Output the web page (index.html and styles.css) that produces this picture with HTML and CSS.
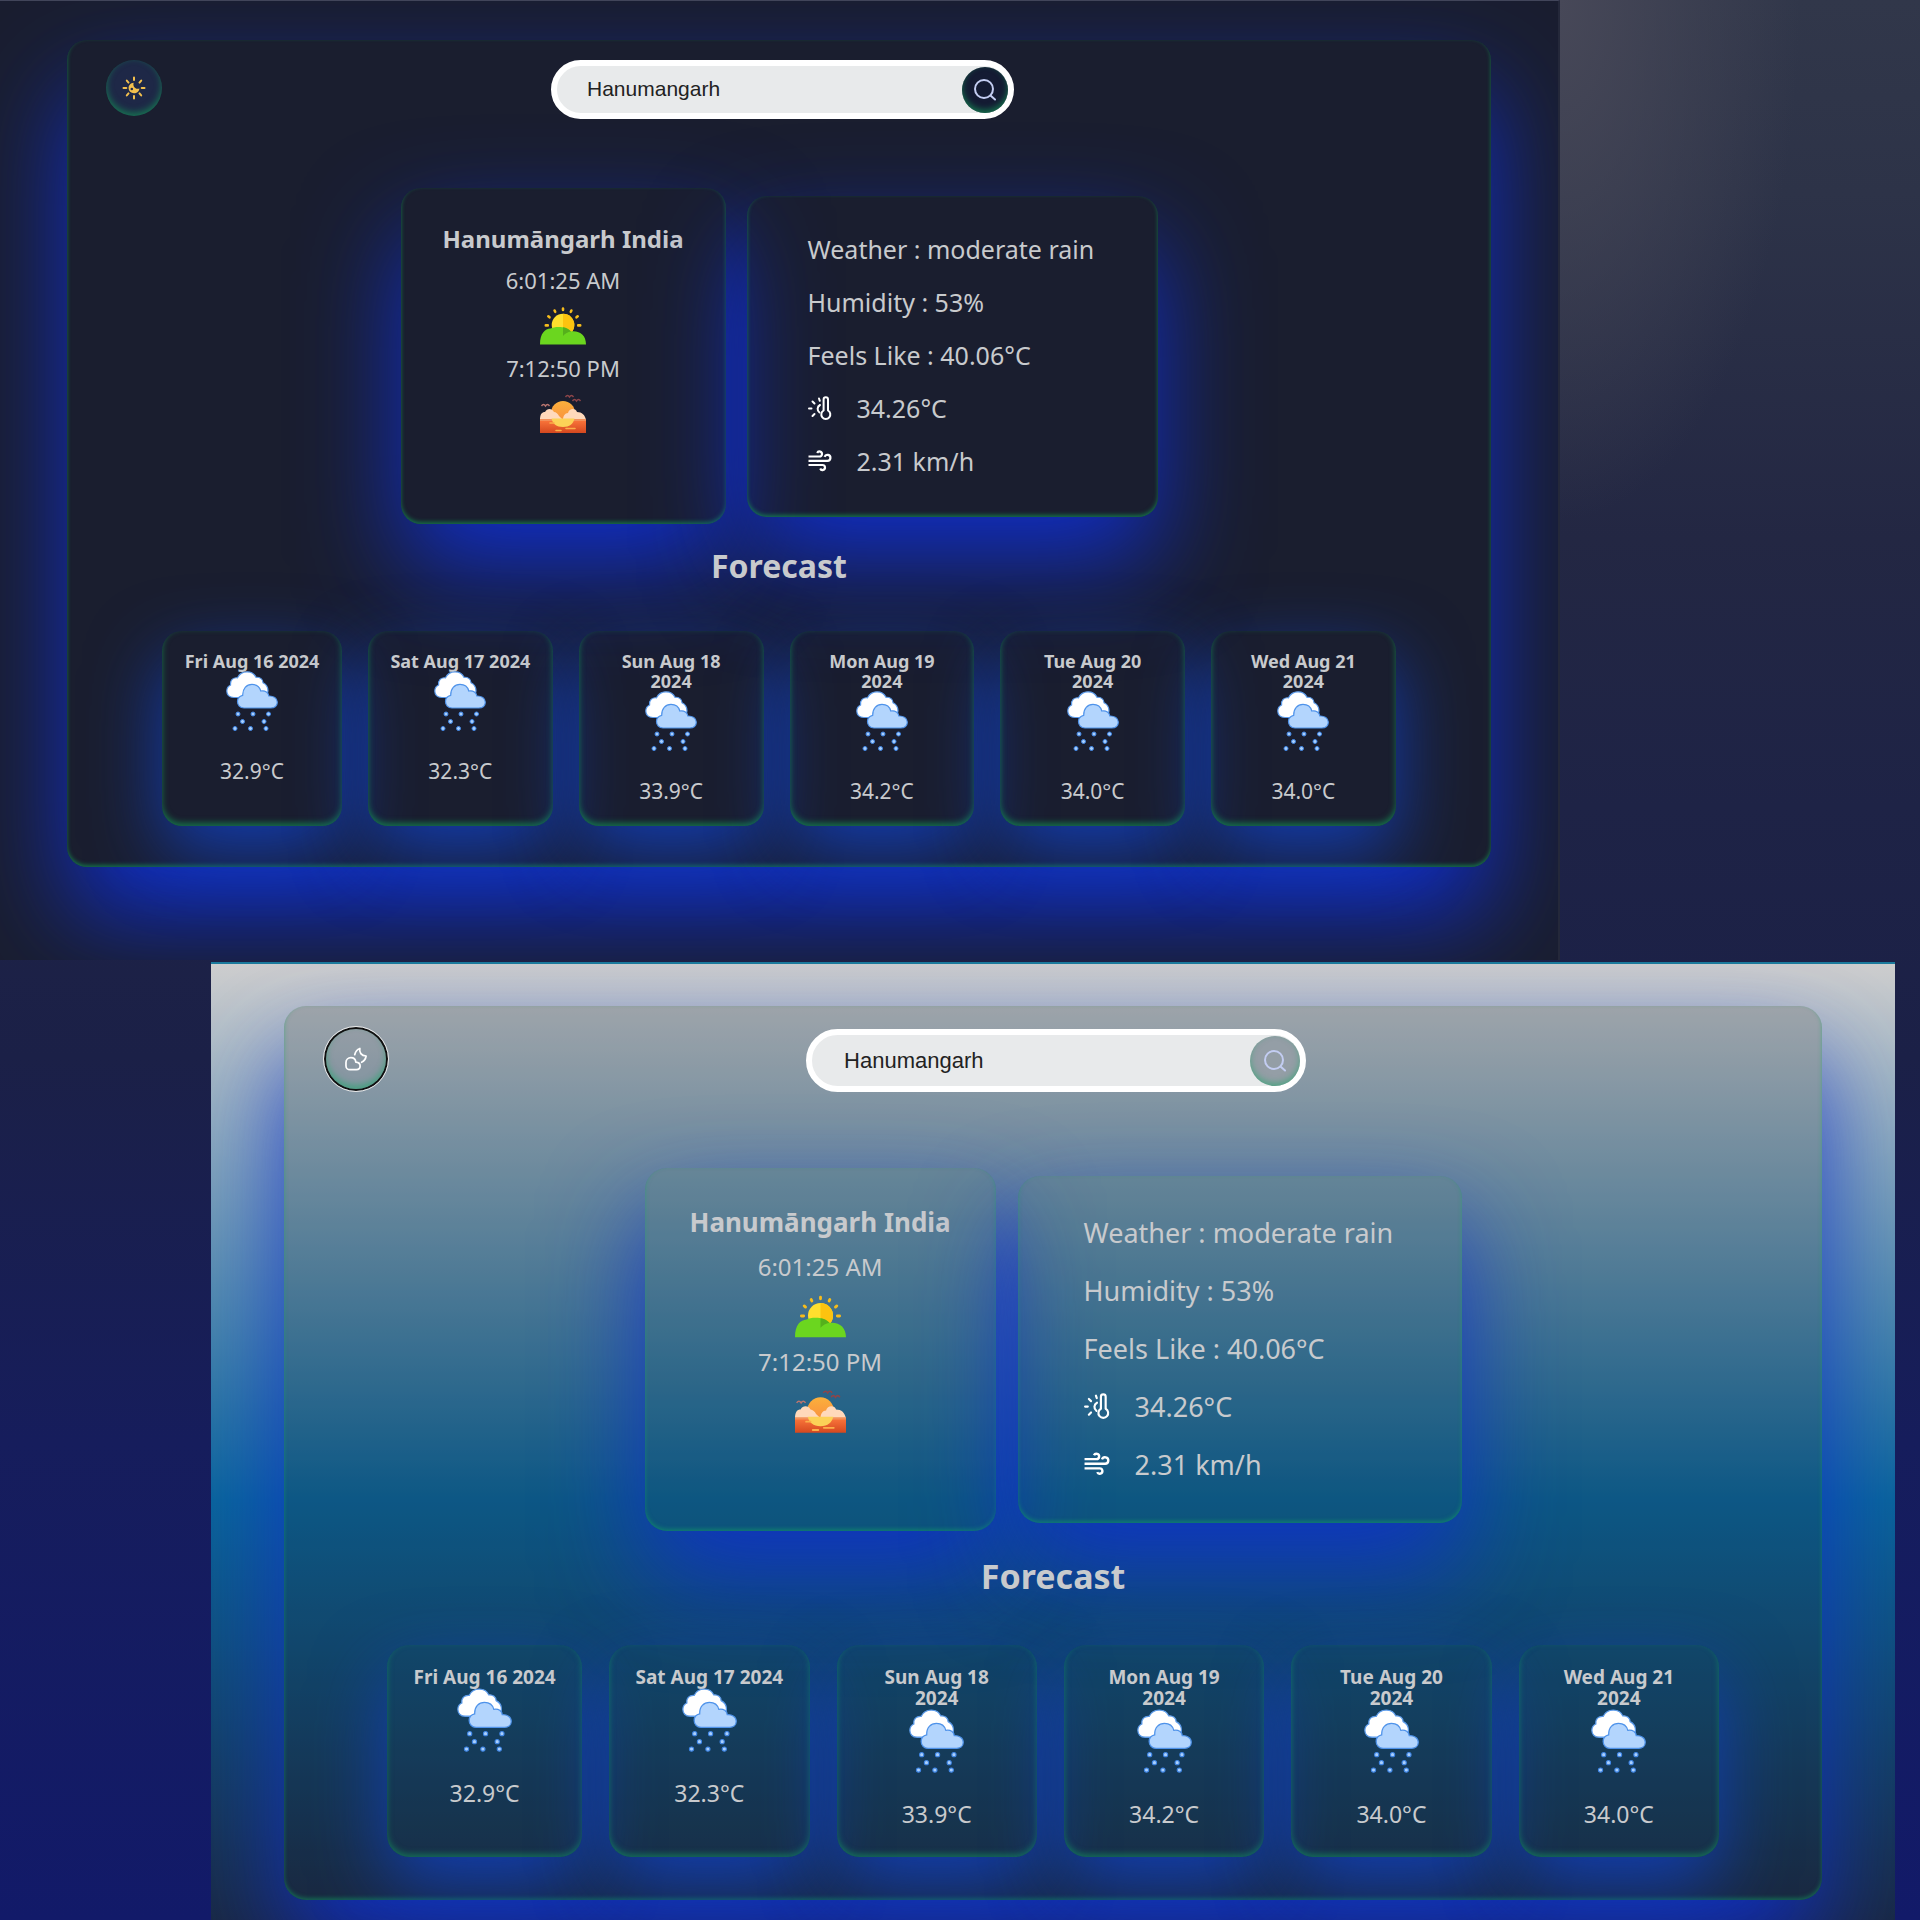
FILE: index.html
```html
<!DOCTYPE html>
<html lang="en">
<head>
<meta charset="utf-8">
<meta name="viewport" content="width=device-width, initial-scale=1">
<title>Weather</title>
<link rel="stylesheet" href="styles.css">
</head>
<body>
<svg class="sprite" aria-hidden="true">
  <defs>
    <linearGradient id="sea" x1="0" y1="0" x2="0" y2="1">
      <stop offset="0" stop-color="#f9743a"/>
      <stop offset="1" stop-color="#d4481f"/>
    </linearGradient>
    <linearGradient id="dusk" x1="0" y1="0" x2="0" y2="1">
      <stop offset="0" stop-color="#fbb03c"/>
      <stop offset="1" stop-color="#f98a3e"/>
    </linearGradient>
  </defs>
  <symbol id="i-sun" viewBox="0 0 24 24">
    <g fill="none" stroke="#f3c04d" stroke-linecap="round">
      <path stroke-width="2" d="M12 1.5v2.6M12 20v2.5M1.5 12h2.8M19.7 12h2.8M4.8 4.6l1.7 2M17.5 17.4l1.7 2M4.8 19.4l1.7-2M17.5 6.6l1.7-2"/>
    </g>
    <path fill="#f3c04d" d="M11.6 6.8c-2.9.3-5 2.500-5 5.300 0 2.900 2.400 5.200 5.400 5.200 2.900 0 5.200-2.100 5.400-4.900-.9.5-2 .6-3 .3-2.300-.7-3.600-3.200-2.800-5.900z"/>
    <circle cx="9.800" cy="13" r="1.300" fill="#20294a"/>
  </symbol>
  <symbol id="i-cloud-moon" viewBox="0 0 26 28">
    <g fill="none" stroke="currentColor" stroke-width="2" stroke-linejoin="round" stroke-linecap="round">
      <path d="M6 26.500a4.700 4.700 0 0 1-4.700-4.700V18c0-3.300 2.500-5.500 5.700-5.500 3.300 0 5.500 2 5.800 5.200 3 .2 5 2 5 4.600 0 2.600-1.800 4.200-4.300 4.200z"/>
      <path d="M11.500 9c.8-3.500 2.800-6.300 6-7.300-1 4.600 1.600 8.600 7.300 8.800-.6 3.500-2.600 6.200-5.300 7.300"/>
    </g>
  </symbol>
  <symbol id="i-search" viewBox="0 0 22 22">
    <g fill="none" stroke="#c3cdf2" stroke-width="2" stroke-linecap="round">
      <circle cx="10" cy="10" r="9"/><path d="M16.500 16.500 21 20.500"/>
    </g>
  </symbol>
  <symbol id="i-sunrise" viewBox="0 0 46 46">
    <g fill="none" stroke="#f6bc1c" stroke-width="2.600" stroke-linecap="round">
      <path d="M23 7.500v1.400M14.600 9.500l.6 1.300M31.400 9.500l-.6 1.300M8.300 15.300l1.200 1M37.700 15.300l-1.200 1M5.800 24.400h2M38.200 24.400h2"/>
    </g>
    <circle cx="23" cy="24" r="11.300" fill="#ffdf2e"/>
    <path fill="#fdc30f" d="M23 12.700a11.300 11.300 0 0 1 0 22.600z"/>
    <path fill="#6bd61f" d="M0 43.500C0 32 5 28 10.500 27.500 15 25 27 25 31 30.500c9-1 15 4 15 13z"/>
    <path fill="#55b01c" d="M23 26.300c3.500.3 6 2 8 4.200-3 .6-6 2-8 4.500z"/>
  </symbol>
  <symbol id="i-sunset" viewBox="0 0 46 46">
    <g fill="none" stroke="#8d4549" stroke-width="1.400">
      <path d="M25.500 8q2-3 4 0q2-3 4 0M32.500 12q2-3 4 0q2-3 4 0"/>
      <path stroke="#b9756f" d="M1.500 17q2-3 4 0q2-3 4 0"/>
    </g>
    <circle cx="23" cy="24" r="12" fill="url(#dusk)"/>
    <path fill="#ffd9bb" d="M0 31c0-6 2-8 5-8 2-4 7-4 9 0 2 0 4 2 5 4l4 4c0-4 2-7 5-7 1-5 8-5 9-1 5 0 8 3 9 8v3H0z"/>
    <path fill="url(#sea)" d="M0 31.500h46V44H0z"/>
    <path fill="#f3915b" d="M0 30h46v2H0z"/>
    <path fill="#fcd257" d="M11.500 29.500h23c-1 5-5 8.500-11.500 8.500s-10.500-3.500-11.500-8.500z"/>
    <path fill="none" stroke="#fcae4a" stroke-width="1.600" stroke-linecap="round" d="M26 39.500h9M16 41.500h5M10 34h4"/>
  </symbol>
  <symbol id="i-heat" viewBox="0 0 24 24">
    <g fill="none" stroke="currentColor" stroke-width="2" stroke-linecap="round">
      <path d="M15.600 14.500V3.400a2.200 2.200 0 0 1 4.400 0V14.500a4.500 4.500 0 1 1-4.400 0z" stroke-linejoin="round"/>
      <path d="M12 9a4.400 4.400 0 0 0-.5 7.500M1 12.500h2.500M4.500 5.500l2 2M11 2.500l.8 2.300M4.500 20l2-2"/>
    </g>
  </symbol>
  <symbol id="i-wind" viewBox="0 0 24 24">
    <g fill="none" stroke="currentColor" stroke-width="2.200" stroke-linecap="butt">
      <path d="M.5 7.500h11a2.500 2.500 0 1 0-2.300-3.500M.5 11.800h19a3 3 0 1 0-2.900-4M.5 16h14a2.500 2.500 0 1 1-2.300 3.500"/>
    </g>
  </symbol>
  <symbol id="i-rain" viewBox="0 0 52 62">
    <path fill="#fff" stroke="#5c9bea" stroke-width="1.200" d="M8 26.500C3 26.500.8 23.500.8 20c0-3 1.700-5 3.800-6C4 9 7 6.500 11.500 6.800 13.500 2.500 17 .8 21 .8c4.500 0 7.500 2 9 5.500 4-.3 7 2 7 5.500 3 1.500 5 4.200 5 8 0 4-3 6.700-7 6.700z"/>
    <path fill="#b3d5fd" stroke="#4f93ea" stroke-width="1.200" d="M18 37c-4 0-6.500-3-6.500-6.500 0-3 2-5.500 5.200-6.200C16.500 17.500 20.500 13.400 26 13.400c4.500 0 7.800 2.600 8.800 6.600 4.500-.8 7.700 1.500 8 5 4.500-.2 8.500 2 8.500 6.300 0 3.500-2.800 5.700-6.300 5.700z"/>
    <g fill="#a9cffc" stroke="#3f86e6" stroke-width="1">
      <circle cx="12" cy="43" r="2"/><circle cx="27" cy="43" r="2"/><circle cx="42.500" cy="43" r="2"/>
      <circle cx="16.500" cy="50.500" r="2"/><circle cx="38" cy="50.500" r="2"/>
      <circle cx="9" cy="57.500" r="2"/><circle cx="24.500" cy="57.500" r="2"/><circle cx="40" cy="57.500" r="2"/>
    </g>
  </symbol>
</svg>

<main>
  <section class="weather dark" aria-label="Dark theme">
    <div class="panel">
      <header class="bar">
        <button class="toggle" type="button" aria-label="Switch to light theme"><svg class="toggle-icon sun"><use href="#i-sun"/></svg></button>
        <form class="search">
          <input class="search-input" type="text" aria-label="City" value="Hanumangarh">
          <button class="search-button" type="button" aria-label="Search"><svg class="search-icon"><use href="#i-search"/></svg></button>
        </form>
      </header>
      <div class="today">
        <article class="card place">
          <h1 class="place-name">Hanumāngarh India</h1>
          <p class="time">6:01:25 AM</p>
          <svg class="time-icon" role="img" aria-label="Sunrise"><use href="#i-sunrise"/></svg>
          <p class="time">7:12:50 PM</p>
          <svg class="time-icon" role="img" aria-label="Sunset"><use href="#i-sunset"/></svg>
        </article>
        <article class="card details">
          <p class="detail">Weather : moderate rain</p>
          <p class="detail">Humidity : 53%</p>
          <p class="detail">Feels Like : 40.06°C</p>
          <p class="detail"><svg class="detail-icon" role="img" aria-label="Temperature"><use href="#i-heat"/></svg>34.26°C</p>
          <p class="detail"><svg class="detail-icon" role="img" aria-label="Wind"><use href="#i-wind"/></svg>2.31 km/h</p>
        </article>
      </div>
      <h2 class="heading">Forecast</h2>
      <ul class="forecast">
        <li class="card day"><h3 class="date">Fri Aug 16 2024</h3><svg class="day-icon"><use href="#i-rain"/></svg><p class="temp">32.9°C</p></li>
        <li class="card day"><h3 class="date">Sat Aug 17 2024</h3><svg class="day-icon"><use href="#i-rain"/></svg><p class="temp">32.3°C</p></li>
        <li class="card day"><h3 class="date">Sun Aug 18<br>2024</h3><svg class="day-icon"><use href="#i-rain"/></svg><p class="temp">33.9°C</p></li>
        <li class="card day"><h3 class="date">Mon Aug 19<br>2024</h3><svg class="day-icon"><use href="#i-rain"/></svg><p class="temp">34.2°C</p></li>
        <li class="card day"><h3 class="date">Tue Aug 20<br>2024</h3><svg class="day-icon"><use href="#i-rain"/></svg><p class="temp">34.0°C</p></li>
        <li class="card day"><h3 class="date">Wed Aug 21<br>2024</h3><svg class="day-icon"><use href="#i-rain"/></svg><p class="temp">34.0°C</p></li>
      </ul>
    </div>
  </section>

  <section class="weather light" aria-label="Light theme">
    <div class="panel">
      <header class="bar">
        <button class="toggle" type="button" aria-label="Switch to dark theme"><svg class="toggle-icon"><use href="#i-cloud-moon"/></svg></button>
        <form class="search">
          <input class="search-input" type="text" aria-label="City" value="Hanumangarh">
          <button class="search-button" type="button" aria-label="Search"><svg class="search-icon"><use href="#i-search"/></svg></button>
        </form>
      </header>
      <div class="today">
        <article class="card place">
          <h1 class="place-name">Hanumāngarh India</h1>
          <p class="time">6:01:25 AM</p>
          <svg class="time-icon" role="img" aria-label="Sunrise"><use href="#i-sunrise"/></svg>
          <p class="time">7:12:50 PM</p>
          <svg class="time-icon" role="img" aria-label="Sunset"><use href="#i-sunset"/></svg>
        </article>
        <article class="card details">
          <p class="detail">Weather : moderate rain</p>
          <p class="detail">Humidity : 53%</p>
          <p class="detail">Feels Like : 40.06°C</p>
          <p class="detail"><svg class="detail-icon" role="img" aria-label="Temperature"><use href="#i-heat"/></svg>34.26°C</p>
          <p class="detail"><svg class="detail-icon" role="img" aria-label="Wind"><use href="#i-wind"/></svg>2.31 km/h</p>
        </article>
      </div>
      <h2 class="heading">Forecast</h2>
      <ul class="forecast">
        <li class="card day"><h3 class="date">Fri Aug 16 2024</h3><svg class="day-icon"><use href="#i-rain"/></svg><p class="temp">32.9°C</p></li>
        <li class="card day"><h3 class="date">Sat Aug 17 2024</h3><svg class="day-icon"><use href="#i-rain"/></svg><p class="temp">32.3°C</p></li>
        <li class="card day"><h3 class="date">Sun Aug 18<br>2024</h3><svg class="day-icon"><use href="#i-rain"/></svg><p class="temp">33.9°C</p></li>
        <li class="card day"><h3 class="date">Mon Aug 19<br>2024</h3><svg class="day-icon"><use href="#i-rain"/></svg><p class="temp">34.2°C</p></li>
        <li class="card day"><h3 class="date">Tue Aug 20<br>2024</h3><svg class="day-icon"><use href="#i-rain"/></svg><p class="temp">34.0°C</p></li>
        <li class="card day"><h3 class="date">Wed Aug 21<br>2024</h3><svg class="day-icon"><use href="#i-rain"/></svg><p class="temp">34.0°C</p></li>
      </ul>
    </div>
  </section>
</main>
</body>
</html>
```
FILE: styles.css
```css
* {
  box-sizing: border-box;
}

body {
  margin: 0;
  min-height: 100vh;
  font-family: "Noto Sans", "Open Sans", sans-serif;
  color: #c8cacd;
  background:
    radial-gradient(ellipse 240px 520px at 81.25% 0, #474858, rgba(71, 72, 88, 0)) no-repeat,
    linear-gradient(#31374a, #2d3348 10%, #232743 28%, #1e2346 42%, #1b2047 55%, #161d5c 75%, #121a69);
}

h1,
h2,
h3,
p,
ul {
  margin: 0;
  padding: 0;
}

.sprite {
  position: absolute;
  width: 0;
  height: 0;
}

/* Themes: colours and the size scale of each one */
.dark {
  --radius: 20px;
  --button: #1e2847;
  --search-button: #141b33;
  --edge: rgba(20, 150, 85, 0.7);
  --glow: rgba(16, 46, 205, 0.95);
  --card: transparent;
  --button-size: 56px;
  --search-width: 463px;
  --search-height: 59px;
  --search-button-size: 46px;
  --search-text: 21px;
  --place-width: 325px;
  --details-width: 411px;
  --details-indent: 61px;
  --row: 53px;
  --icon: 24px;
  --name: 24px;
  --text: 25px;
  --time: 22px;
  --temp: 21px;
  --date: 18px;
  --date-line: 20px;
  --title: 32px;
  --time-icon: 46px;
  --day-icon: 62px;
  --day-icon-width: 52px;
  --line: 26px;
  --card-gap: 26px;
  --today-gap: 21px;
  width: 81.25%;
  padding: 39px 3.500% 93px;
  overflow: hidden;
  background: #1a1e2f;
  border-top: 1px solid #41455a;
  border-right: 2px solid #24283a;
}

.light {
  --radius: 22px;
  --button: rgba(26, 31, 46, 0.02);
  --search-button: #949ea6;
  --edge: rgba(18, 170, 100, 0.5);
  --glow: rgba(16, 46, 205, 0.85);
  --card: rgba(26, 80, 90, 0.08);
  --button-size: 60px;
  --search-width: 500px;
  --search-height: 63px;
  --search-button-size: 50px;
  --search-text: 22px;
  --place-width: 351px;
  --details-width: 444px;
  --details-indent: 66px;
  --row: 58px;
  --icon: 26px;
  --name: 26px;
  --text: 27px;
  --time: 24px;
  --temp: 23px;
  --date: 19px;
  --date-line: 21px;
  --title: 34px;
  --time-icon: 51px;
  --day-icon: 66px;
  --day-icon-width: 55px;
  --line: 28px;
  --card-gap: 27px;
  --today-gap: 22px;
  width: 87.7%;
  margin: 2px 0 0 11%;
  padding: 42px 3.800% 21px;
  overflow: hidden;
  border-top: 2px solid #1b7a9c;
  background: linear-gradient(#cecece, #0a669b 56%, #1a2942);
}

/* Panel */
.panel {
  border-radius: var(--radius);
  box-shadow:
    0 50px 100px var(--glow),
    inset 0 -2px 4px var(--edge);
}

.dark .panel {
  padding-bottom: 41px;
  background: #1a1e2f;
}

.light .panel {
  padding-bottom: 43px;
  background: rgba(26, 31, 46, 0.2);
}

.bar {
  display: grid;
  grid-template-columns: 1fr auto 1fr;
  align-items: start;
  padding: 20px 32px 0 39px;
}

.light .bar {
  padding: 23px 36px 0 42px;
}

.toggle,
.search-button {
  display: flex;
  align-items: center;
  justify-content: center;
  padding: 0;
  border: 0;
  border-radius: 50%;
  color: #fff;
}

.toggle {
  width: var(--button-size);
  height: var(--button-size);
  background: var(--button);
  box-shadow: inset 0 -3px 7px var(--edge);
}

.light .toggle {
  outline: 1px solid #e8e8e8;
  outline-offset: 2px;
  box-shadow: 0 0 0 2px #101010, inset 0 -4px 6px var(--edge);
}

.toggle-icon {
  width: 26px;
  height: 24px;
}

.toggle-icon.sun {
  width: 24px;
}

.search {
  display: flex;
  align-items: center;
  width: var(--search-width);
  height: var(--search-height);
  border: 6px solid #fff;
  border-radius: 32px;
  background: #e8eaeb;
}

.search-input {
  flex: 1;
  min-width: 0;
  padding: 0 0 2px 30px;
  border: 0;
  outline: 0;
  background: none;
  color: #222;
  font: var(--search-text) "Liberation Sans", Arial, sans-serif;
}

.light .search-input {
  padding: 0 0 0 32px;
}

.search-button {
  width: var(--search-button-size);
  height: var(--search-button-size);
  background: var(--search-button);
  box-shadow: inset 0 -3px 6px var(--edge);
}

.search-icon {
  width: 22px;
  height: 22px;
}

/* Cards */
.card {
  border-radius: var(--radius);
  background: var(--card);
  box-shadow:
    0 46px 100px var(--glow),
    inset 0 -2px 4px var(--edge);
}

.today {
  display: flex;
  align-items: center;
  justify-content: center;
  gap: var(--today-gap);
  margin-top: 69px;
}

.light .today {
  margin-top: 76px;
}

.place {
  display: flex;
  flex-direction: column;
  align-items: center;
  gap: 8px;
  width: var(--place-width);
  padding: 35px 0 89px;
  text-align: center;
}

.light .place {
  padding: 38px 0 96px;
}

.place-name {
  margin-bottom: 4px;
  font-size: var(--name);
  line-height: 32px;
}

.light .place-name {
  margin-bottom: 7px;
}

.time,
.temp {
  font-size: var(--time);
  line-height: var(--line);
}

.temp {
  font-size: var(--temp);
}

.time-icon {
  width: var(--time-icon);
  height: var(--time-icon);
}

.details {
  width: var(--details-width);
  padding: 27px 0 29px var(--details-indent);
}

.light .details {
  padding: 27px 0 30px var(--details-indent);
}

.detail {
  display: flex;
  align-items: center;
  gap: 25px;
  height: var(--row);
  font-size: var(--text);
}

.detail-icon {
  width: var(--icon);
  height: var(--icon);
  color: #fff;
}

.heading {
  margin: 24px 0 47px;
  font-size: var(--title);
  line-height: 36px;
  text-align: center;
}

.light .heading {
  margin: 27px 0 51px;
}

.forecast {
  display: grid;
  grid-template-columns: 36fr repeat(5, 37fr);
  gap: var(--card-gap);
  padding: 0 95px;
  list-style: none;
}

.light .forecast {
  padding: 0 103px;
}

.day {
  display: flex;
  flex-direction: column;
  align-items: center;
  padding: 20px 0 22px;
  text-align: center;
  box-shadow:
    0 28px 72px rgba(18, 62, 185, 0.9),
    inset 0 -3px 6px var(--edge);
}

.light .day {
  padding: 22px 0 29px;
}

.date {
  font-size: var(--date);
  font-weight: 700;
  line-height: var(--date-line);
  white-space: nowrap;
}

.day-icon {
  width: var(--day-icon-width);
  height: var(--day-icon);
  margin-bottom: 25px;
}
```
